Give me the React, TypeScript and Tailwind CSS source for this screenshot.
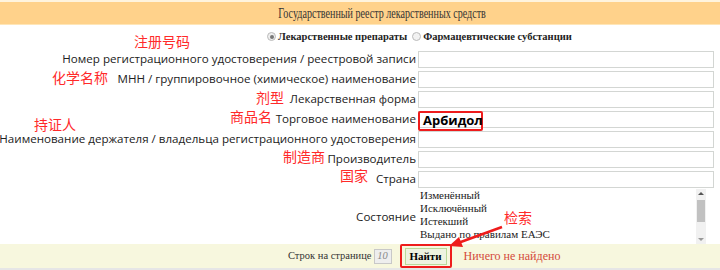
import React from "react";

const rows = [
  { label: "Номер регистрационного удостоверения / реестровой записи" },
  { label: "МНН / группировочное (химическое) наименование" },
  { label: "Лекарственная форма" },
  { label: "Торговое наименование", value: "Арбидол" },
  { label: "Наименование держателя / владельца регистрационного удостоверения" },
  { label: "Производитель" },
  { label: "Страна" },
];

const statuses = ["Изменённый", "Исключённый", "Истекший", "Выдано по правилам ЕАЭС"];

const notes = [
  { text: "注册号码", cls: "left-[134px] top-[33px]" },
  { text: "化学名称", cls: "left-[52px] top-[69px]" },
  { text: "剂型", cls: "left-[256px] top-[89px]" },
  { text: "商品名", cls: "left-[230px] top-[108px]" },
  { text: "持证人", cls: "left-[34px] top-[116px]" },
  { text: "制造商", cls: "left-[283px] top-[148px]" },
  { text: "国家", cls: "left-[340px] top-[167px]" },
  { text: "检索", cls: "left-[504px] top-[209px]" },
];

const serif = "font-['Liberation_Serif','Times_New_Roman',serif]";
const sans = "font-['Open_Sans','Noto_Sans',sans-serif]";

export default function App() {
  return (
    <div className="relative w-[720px] h-[270px] bg-white overflow-hidden">
      <div className="h-[2px] bg-[#fff4de]" />
      <div className={`h-[22px] bg-[#ffd28b] flex items-center justify-center pl-[44px] text-[14px] text-[#333] ${serif}`}>
        <span className="inline-block scale-x-[0.72] whitespace-nowrap">
          Государственный реестр лекарственных средств
        </span>
      </div>
      <div className="h-[1px] bg-[#ffe6b8]" />

      <div className={`h-[23px] flex items-center pl-[267px] text-[10.5px] font-bold text-[#222] ${serif}`}>
        <span className="w-[9px] h-[9px] rounded-full border border-[#bbb] bg-[#eee] flex items-center justify-center mr-[2px]">
          <span className="w-[4px] h-[4px] rounded-full bg-[#777]" />
        </span>
        <span>Лекарственные препараты</span>
        <span className="w-[9px] h-[9px] rounded-full border border-[#bbb] bg-[#f2f2f2] ml-[5px] mr-[2px]" />
        <span>Фармацевтические субстанции</span>
      </div>

      <div className="grid grid-cols-[416px_296px] gap-x-[2px] pt-[1px]">
        {rows.map((r) => (
          <React.Fragment key={r.label}>
            <div className={`h-[20px] flex items-center justify-end text-[11.6px] text-[#222] whitespace-nowrap ${sans}`}>
              {r.label}
            </div>
            <div className="h-[20px] flex items-center">
              <div className="relative w-full h-[17px] border border-[#d3d6d3] bg-white">
                {r.value && (
                  <div
                    className={`absolute -left-[1px] -top-[1px] w-[65px] h-[20px] border-2 border-[#ee1c1c] rounded-[2px] flex items-center pl-[3px] text-[13px] font-bold text-black ${sans}`}
                  >
                    {r.value}
                  </div>
                )}
              </div>
            </div>
          </React.Fragment>
        ))}

        <div className={`h-[55px] flex items-center justify-end text-[11.6px] text-[#222] ${sans}`}>
          Состояние
        </div>
        <div className="h-[55px] flex">
          <div className={`flex-1 flex flex-col pl-[2px] text-[11px] leading-[13px] text-[#222] ${serif}`}>
            {statuses.map((s) => (
              <span key={s}>{s}</span>
            ))}
          </div>
          <div className="w-[10px] mr-[8px] bg-[#f1f1f1] flex flex-col items-center justify-between py-[3px]">
            <span className="w-0 h-0 border-l-[3px] border-r-[3px] border-b-[3px] border-l-transparent border-r-transparent border-b-[#555]" />
            <span className="w-[8px] h-[22px] bg-[#c1c1c1] -mt-[12px]" />
            <span className="w-0 h-0 border-l-[3px] border-r-[3px] border-t-[3px] border-l-transparent border-r-transparent border-t-[#999]" />
          </div>
        </div>
      </div>

      <div className={`h-[24px] bg-[#f7f7de] flex items-center pl-[288px] text-[10.5px] text-[#333] ${serif}`}>
        <span>Строк на странице</span>
        <span className="ml-[2px] w-[18px] h-[15px] border border-[#c8c8c8] bg-[#eee] italic text-[#888] flex items-center justify-center">
          10
        </span>
        <span className="ml-[8px] w-[52px] h-[24px] border-2 border-[#ee1c1c] rounded-[2px] flex items-center justify-center">
          <span className="w-[42px] h-[17px] bg-[#eef3e0] border border-[#b9d99b] flex items-center justify-center font-bold text-[11px] text-black">
            Найти
          </span>
        </span>
        <span className="ml-[12px] text-[12px] text-[#d44a3a]">Ничего не найдено</span>
      </div>
      <div className="h-[4px] bg-[#e6e6e6]" />

      {notes.map((n) => (
        <span
          key={n.text}
          className={`absolute ${n.cls} text-[14px] leading-[16px] text-[#ff2a2a] font-['Noto_Sans_CJK_SC',sans-serif]`}
        >
          {n.text}
        </span>
      ))}

      <svg className="absolute left-[446px] top-[224px]" width="60" height="26" viewBox="0 0 60 26">
        <line x1="56" y1="3" x2="12" y2="19" stroke="#ee1c1c" strokeWidth="2.5" />
        <polygon points="3,22 13,13 17,23" fill="#ee1c1c" />
      </svg>
    </div>
  );
}
